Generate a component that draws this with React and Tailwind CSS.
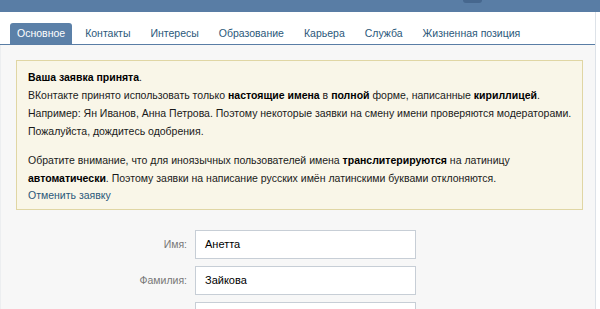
import React from 'react'

const tabs = ['Основное', 'Контакты', 'Интересы', 'Образование', 'Карьера', 'Служба', 'Жизненная позиция']

const App = () => {
  return (
    <div className="w-[600px] h-[309px] overflow-hidden bg-white text-[10.5px] text-black" style={{ fontFamily: '"Liberation Sans", Arial, sans-serif' }}>
      {/* top bar */}
      <div className="relative h-[12px] bg-[#597da5]">
        <div className="absolute left-[463px] top-0 w-[19px] h-[3px] rounded-b-[3px] bg-[#46678e]" />
      </div>

      <div className="flex">
        <div className="w-[596px] border-r border-[#dde2e8]">
          {/* tabs */}
          <div className="flex pt-[11px] pl-[10px] border-b border-[#597da5] text-[10.5px]">
            {tabs.map((tab, i) => (
              <div
                key={tab}
                className={
                  i === 0
                    ? 'h-[21px] px-[7px] flex items-center rounded-t-[3px] bg-[#5b80a8] text-white'
                    : 'h-[21px] px-[7px] ml-[6px] flex items-center text-[#2b587a]'
                }
              >
                {tab}
              </div>
            ))}
          </div>

          {/* content */}
          <div className="bg-[#f7f7f7] h-[264px] pl-[15px] pr-[12px] pt-[15px] border-l border-[#eceef0]">
            <div className="bg-[#f9f6e8] border border-[#e0d6a4] pl-[11px] pt-[7px] pb-[6px] leading-[18px] text-[#1a1a1a] whitespace-nowrap">
              <div><b className="text-black">Ваша заявка принята</b>.</div>
              <div>
                ВКонтакте принято использовать только <b className="text-black">настоящие имена</b> в <b className="text-black">полной</b> форме, написанные <b className="text-black">кириллицей</b>.
              </div>
              <div>Например: Ян Иванов, Анна Петрова. Поэтому некоторые заявки на смену имени проверяются модераторами.</div>
              <div>Пожалуйста, дождитесь одобрения.</div>
              <div className="mt-[11px]">
                Обратите внимание, что для иноязычных пользователей имена <b className="text-black">транслитерируются</b> на латиницу
              </div>
              <div>
                <b className="text-black">автоматически</b>. Поэтому заявки на написание русских имён латинскими буквами отклоняются.
              </div>
              <div className="leading-[16px] text-[#2b587a]">Отменить заявку</div>
            </div>

            {/* form */}
            <div className="mt-[20px] flex flex-col gap-[7px]">
              {[
                ['Имя:', 'Анетта'],
                ['Фамилия:', 'Зайкова'],
                ['', ''],
              ].map(([label, value], i) => (
                <div key={i} className="flex items-center">
                  <div className="w-[179px] pr-[8px] text-right text-[#777]">{label}</div>
                  <div className="w-[221px] h-[29px] bg-white border border-[#c7ced6] pl-[9px] flex items-center text-black text-[11px]">
                    {value}
                  </div>
                </div>
              ))}
            </div>
          </div>
        </div>
        <div className="flex-1 bg-white" />
      </div>
    </div>
  )
}

export default App
